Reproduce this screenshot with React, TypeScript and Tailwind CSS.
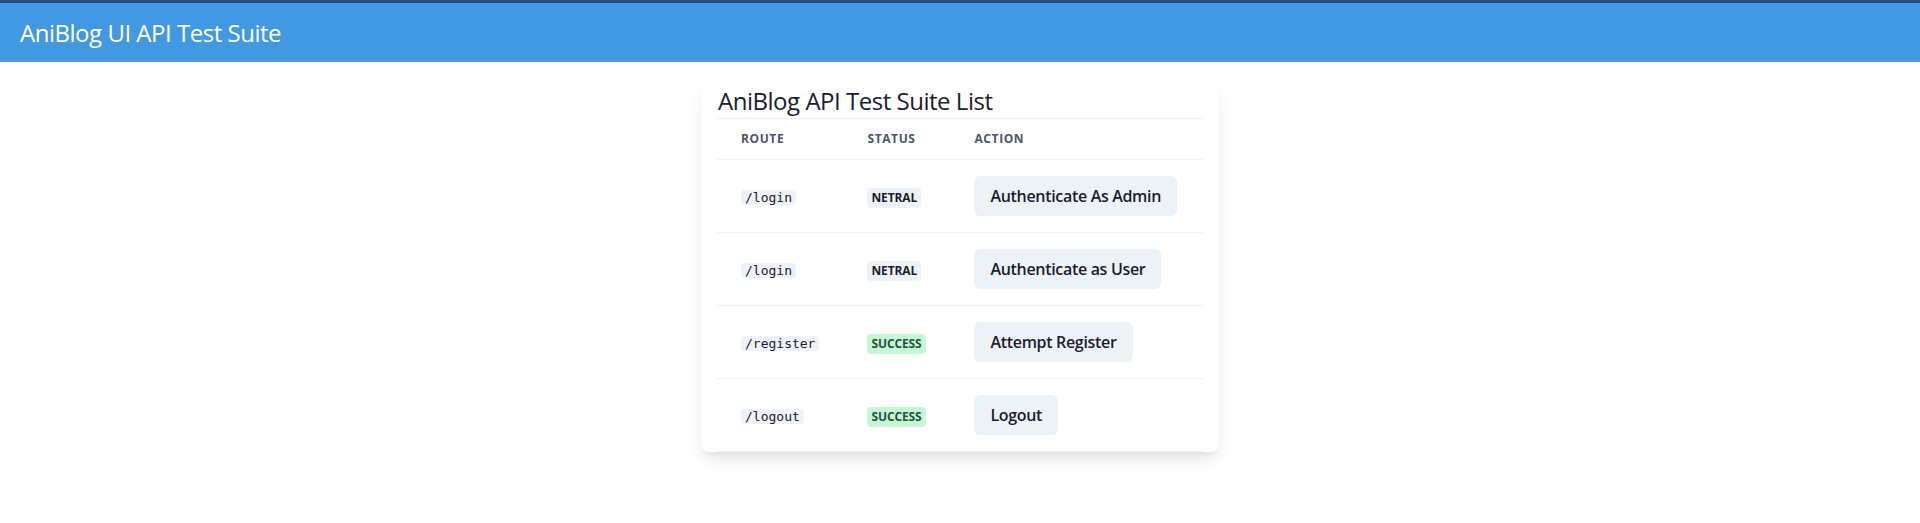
import React from 'react';

const tests = [
  { route: '/login', status: 'NETRAL', action: 'Authenticate As Admin' },
  { route: '/login', status: 'NETRAL', action: 'Authenticate as User' },
  { route: '/register', status: 'SUCCESS', action: 'Attempt Register' },
  { route: '/logout', status: 'SUCCESS', action: 'Logout' },
];

const StatusBadge = ({ status }: { status: string }) => {
  const success = status === 'SUCCESS';
  return (
    <span
      className={`inline-block px-1 rounded-sm text-xs font-bold leading-5 uppercase tracking-[-0.01em] ${
        success ? 'bg-[#C6F6D5] text-[#22543D]' : 'bg-[#EDF2F7] text-[#1A202C]'
      }`}
    >
      {status}
    </span>
  );
};

const App = () => {
  return (
    <div className="min-h-screen bg-white font-['Open_Sans',sans-serif] text-[#1A202C]">
      {/* Top bar */}
      <header className="h-[62px] border-t-[3px] border-[#2A4A7F] bg-[#4299E1] flex items-center px-5">
        <h1 className="text-2xl text-white tracking-[-0.02em]">AniBlog UI API Test Suite</h1>
      </header>

      <div className="flex justify-center pt-5">
        <div className="w-[518px] bg-white rounded-lg shadow-[0_10px_15px_-3px_rgba(0,0,0,0.1),0_4px_6px_-2px_rgba(0,0,0,0.05)] px-4 overflow-hidden">
          <h2 className="h-[37px] text-2xl leading-[38px] tracking-[-0.02em] border-b border-[#EDF2F7] pl-px">
            AniBlog API Test Suite List
          </h2>

          <table className="w-full border-collapse">
            <thead>
              <tr className="border-b border-[#EDF2F7]">
                <th className="w-[126px] px-6 py-3 text-left text-xs leading-4 font-bold tracking-wider uppercase text-[#4A5568]">
                  Route
                </th>
                <th className="w-[107px] px-6 py-3 text-left text-xs leading-4 font-bold tracking-wider uppercase text-[#4A5568]">
                  Status
                </th>
                <th className="px-6 py-3 text-left text-xs leading-4 font-bold tracking-wider uppercase text-[#4A5568]">
                  Action
                </th>
              </tr>
            </thead>
            <tbody>
              {tests.map((test, index) => (
                <tr key={index} className="border-b border-[#EDF2F7]">
                  <td className="px-6 py-4 whitespace-nowrap">
                    <code className="px-1 rounded-sm bg-[#EDF2F7] font-['DejaVu_Sans_Mono',monospace] text-[13px] leading-5">
                      {test.route}
                    </code>
                  </td>
                  <td className="px-6 py-4 whitespace-nowrap">
                    <StatusBadge status={test.status} />
                  </td>
                  <td className="px-6 py-4 whitespace-nowrap">
                    <button className="h-10 px-4 rounded-md bg-[#EDF2F7] font-semibold text-base tracking-[-0.02em] text-[#1A202C] whitespace-nowrap">
                      {test.action}
                    </button>
                  </td>
                </tr>
              ))}
            </tbody>
          </table>
        </div>
      </div>
    </div>
  );
};

export default App;
